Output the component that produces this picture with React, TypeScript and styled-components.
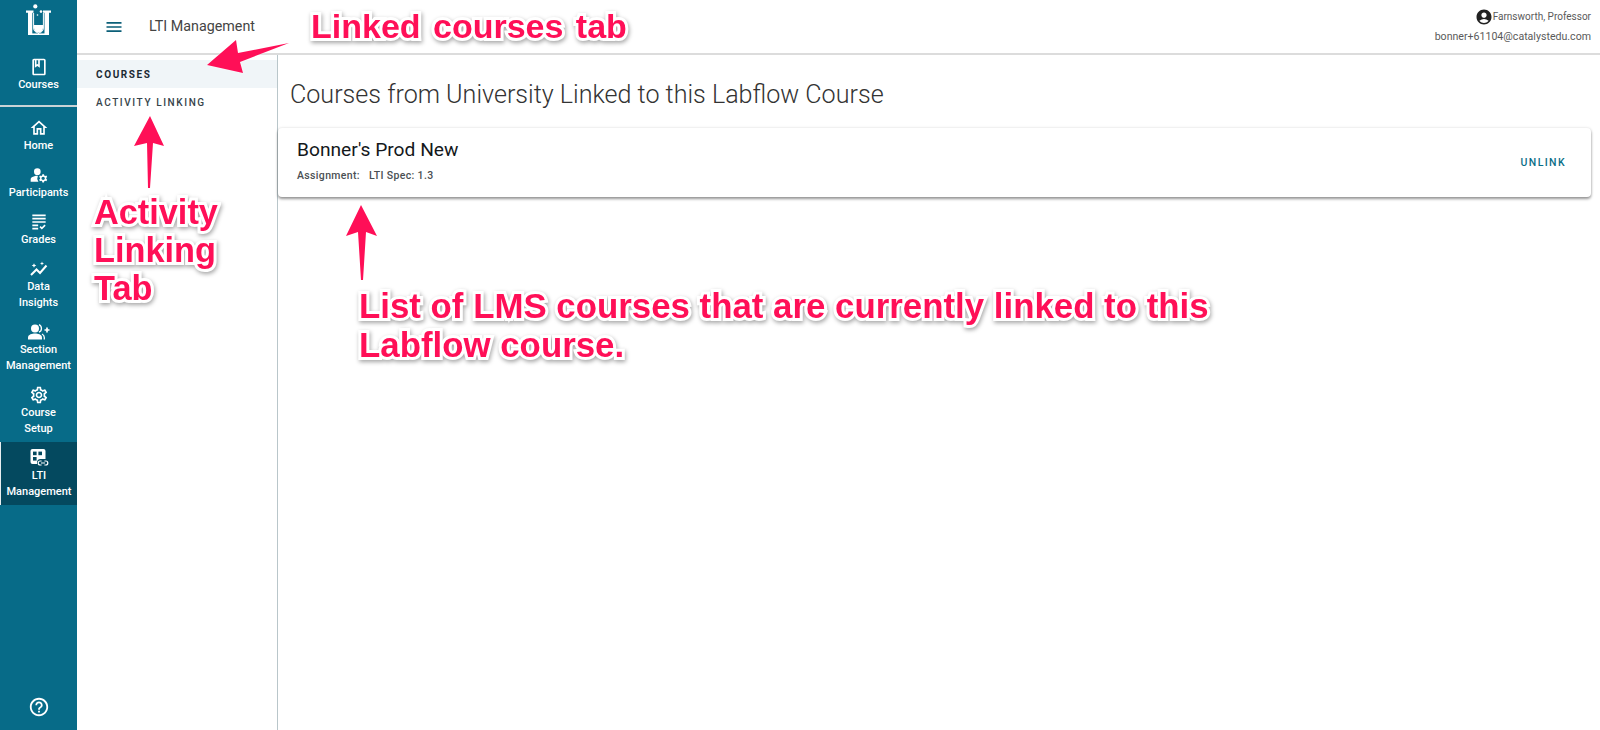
import { FC, ReactNode } from "react";
import styled, { createGlobalStyle } from "styled-components";
import {
  MdAccountCircle,
  MdGrading,
  MdHelpOutline,
  MdManageAccounts,
  MdMenu,
  MdOutlineBook,
  MdOutlineHome,
  MdOutlineSettings,
} from "react-icons/md";

const GlobalStyle = createGlobalStyle`
  html, body, #root {
    margin: 0;
    height: 100%;
  }
  body {
    font-family: Roboto, "Liberation Sans", sans-serif;
    background: #fff;
    overflow: hidden;
  }
`;

const LogoMark = () => (
  <svg width="36" height="40" viewBox="0 0 36 40" fill="none">
    <circle cx="14.3" cy="6.4" r="2.1" fill="#fff" />
    <circle cx="20" cy="11.6" r="1.3" fill="#fff" />
    <circle cx="16.5" cy="15" r="0.8" fill="#fff" />
    <path
      d="M5 10.500h7.500v2.300h-1.200V35H7V12.800H5zM22 10.500h8v2.300h-2V35h-4.500V12.800H22z"
      fill="#fff"
    />
    <path d="M11 35h13v-1.600H11z" fill="#fff" />
    <path d="M13 25h9v3a4.500 4.500 0 0 1-9 0z" fill="#fff" />
    <path
      d="M12.600 13v15a4.900 4.900 0 0 0 9.800 0V13M17.500 33v2"
      stroke="#fff"
      strokeWidth="1"
    />
  </svg>
);

const InsightsIcon = () => (
  <svg width="20" height="20" viewBox="0 0 20 20" fill="none">
    <path d="M2 16l5.500-5.500 3.500 3.500 6.500-7.500" stroke="#fff" strokeWidth="2" />
    <path
      d="M5 4.200l.7 1.600 1.600.7-1.600.7L5 8.800l-.7-1.600-1.600-.7 1.600-.7zM13 2.400l.6 1.500 1.500.6-1.500.6-.6 1.500-.6-1.500-1.500-.6 1.500-.6z"
      fill="#fff"
    />
  </svg>
);

const SectionIcon = () => (
  <svg width="22" height="20" viewBox="0 0 22 20" fill="none">
    <circle cx="7" cy="6.500" r="4" fill="#fff" />
    <path d="M0 17.500v-2C0 12.600 4.300 11.600 7 11.600s7 1 7 3.900v2z" fill="#fff" />
    <path
      d="M11 2.700a4.100 4.100 0 0 1 0 7.500M14 12c1.300.7 2.300 1.800 2.300 3.500v2"
      stroke="#fff"
      strokeWidth="1.300"
    />
    <path d="M19 5.500v5M16.500 8h5" stroke="#fff" strokeWidth="1.700" />
  </svg>
);

const LtiIcon = () => (
  <svg width="20" height="20" viewBox="0 0 20 20">
    <rect x="1.500" y="1" width="15" height="15" rx="2" fill="#fff" />
    <rect x="4" y="3.600" width="3.600" height="3.600" fill="#04495f" />
    <rect x="9.400" y="3.600" width="3.600" height="3.600" fill="#04495f" />
    <rect x="4" y="9" width="3.600" height="3.600" fill="#04495f" />
    <rect x="8" y="11" width="12" height="8" rx="3.500" fill="#04495f" />
    <path
      d="M12.600 13H11.200a2 2 0 0 0 0 4h1.400M15.400 13h1.400a2 2 0 0 1 0 4h-1.400M12 15h4"
      stroke="#fff"
      strokeWidth="1.200"
      fill="none"
    />
  </svg>
);

interface NavItemProps {
  icon: ReactNode;
  lines: string[];
  active?: boolean;
}
const NavItem: FC<NavItemProps> = ({ icon, lines, active }) => (
  <NavItemWrapper $active={active}>
    <NavIcon>{icon}</NavIcon>
    {lines.map((line) => (
      <NavLabel key={line}>{line}</NavLabel>
    ))}
  </NavItemWrapper>
);

export default function App() {
  return (
    <Page>
      <GlobalStyle />
      <Sidebar>
        <Logo>
          <LogoMark />
        </Logo>
        <NavItem icon={<MdOutlineBook size={20} />} lines={["Courses"]} />
        <SideDivider />
        <NavItem icon={<MdOutlineHome size={20} />} lines={["Home"]} />
        <NavItem icon={<MdManageAccounts size={20} />} lines={["Participants"]} />
        <NavItem icon={<MdGrading size={20} />} lines={["Grades"]} />
        <NavItem icon={<InsightsIcon />} lines={["Data", "Insights"]} />
        <NavItem icon={<SectionIcon />} lines={["Section", "Management"]} />
        <NavItem icon={<MdOutlineSettings size={20} />} lines={["Course", "Setup"]} />
        <NavItem icon={<LtiIcon />} lines={["LTI", "Management"]} active />
        <HelpButton>
          <MdHelpOutline size={22} />
        </HelpButton>
      </Sidebar>

      <Main>
        <TopBar>
          <MenuButton>
            <MdMenu size={20} />
          </MenuButton>
          <PageTitle>LTI Management</PageTitle>
          <UserBlock>
            <UserName>
              <MdAccountCircle size={18} color="#222" />
              Farnsworth, Professor
            </UserName>
            <UserEmail>bonner+61104@catalystedu.com</UserEmail>
          </UserBlock>
        </TopBar>

        <Body>
          <SubNav>
            <SubNavItem $active>COURSES</SubNavItem>
            <SubNavItem>ACTIVITY LINKING</SubNavItem>
          </SubNav>
          <Content>
            <Heading>Courses from University Linked to this Labflow Course</Heading>
            <Card>
              <div>
                <CardTitle>Bonner's Prod New</CardTitle>
                <CardMeta>
                  <span>Assignment:</span>
                  <span>LTI Spec: 1.3</span>
                </CardMeta>
              </div>
              <UnlinkButton>UNLINK</UnlinkButton>
            </Card>
          </Content>
        </Body>
      </Main>

      <ArrowLayer width="1600" height="730" viewBox="0 0 1600 730">
        <polygon points="207,65 236,40 238,53 289,43 240,62 243,73" />
        <polygon points="150,116 134,146 147,143 148,188 150,188 153,143 164,146" />
        <polygon points="361,205 346,236 358,232 361,280 363,280 366,232 377,236" />
      </ArrowLayer>

      <TabCallout>Linked courses tab</TabCallout>
      <ActivityCallout>
        Activity
        <br />
        Linking
        <br />
        Tab
      </ActivityCallout>
      <ListCallout>
        List of LMS courses that are currently linked to this
        <br />
        Labflow course.
      </ListCallout>
    </Page>
  );
}

const Page = styled.div`
  position: relative;
  display: flex;
  width: 1600px;
  height: 730px;
  overflow: hidden;
`;

const Sidebar = styled.aside`
  flex: 0 0 77px;
  display: flex;
  flex-direction: column;
  background: #076b88;
  color: #fff;
`;

const Logo = styled.div`
  height: 51px;
  display: flex;
  justify-content: center;
  align-items: flex-start;
`;

const SideDivider = styled.div`
  height: 2px;
  margin: 7px 0 5px;
  background: #c9d3d6;
`;

const NavItemWrapper = styled.div<{ $active?: boolean }>`
  display: flex;
  flex-direction: column;
  align-items: center;
  padding: 6px 0 5px;
  background: ${({ $active }) => ($active ? "#04495f" : "transparent")};
  border-left: ${({ $active }) => ($active ? "1px solid #e8eef0" : "0")};
`;

const NavIcon = styled.div`
  height: 20px;
  display: flex;
  align-items: center;
  justify-content: center;
`;

const NavLabel = styled.div`
  font-size: 11px;
  font-weight: 500;
  line-height: 16px;
  white-space: nowrap;
`;

const HelpButton = styled.div`
  margin-top: auto;
  padding-bottom: 12px;
  display: flex;
  justify-content: center;
`;

const Main = styled.div`
  flex: 1;
  display: flex;
  flex-direction: column;
  min-width: 0;
`;

const TopBar = styled.header`
  height: 53px;
  flex: none;
  display: flex;
  align-items: center;
  padding: 0 9px 0 27px;
  border-bottom: 2px solid #dcdcdc;
`;

const MenuButton = styled.div`
  display: flex;
  color: #0b5f78;
`;

const PageTitle = styled.div`
  margin: 0 0 1px 25px;
  font-size: 14.3px;
  color: #444;
`;

const UserBlock = styled.div`
  margin-left: auto;
  display: flex;
  flex-direction: column;
  align-items: flex-end;
  gap: 3px;
  color: #5a5a5a;
`;

const UserName = styled.div`
  display: flex;
  align-items: center;
  font-size: 10px;
  line-height: 18px;
`;

const UserEmail = styled.div`
  font-size: 10.6px;
  line-height: 16px;
`;

const Body = styled.div`
  flex: 1;
  display: flex;
  min-height: 0;
`;

const SubNav = styled.nav`
  flex: 0 0 200px;
  padding-top: 5px;
  border-right: 1px solid #b9c6ca;
`;

const SubNavItem = styled.div<{ $active?: boolean }>`
  height: 28px;
  padding-left: 19px;
  display: flex;
  align-items: center;
  font-size: 10px;
  letter-spacing: 1.6px;
  font-weight: ${({ $active }) => ($active ? 700 : 500)};
  color: ${({ $active }) => ($active ? "#1b2a33" : "#36434a")};
  background: ${({ $active }) => ($active ? "#f0f5f8" : "transparent")};
`;

const Content = styled.main`
  flex: 1;
  min-width: 0;
  padding-right: 9px;
`;

const Heading = styled.h1`
  margin: 0;
  padding: 24px 0 0 12px;
  height: 73px;
  box-sizing: border-box;
  font-size: 25.1px;
  font-weight: 300;
  line-height: 32px;
  color: #333;
`;

const Card = styled.section`
  height: 69px;
  box-sizing: border-box;
  padding: 11px 25px 0 19px;
  display: flex;
  justify-content: space-between;
  align-items: flex-start;
  background: #fff;
  border-radius: 4px;
  box-shadow: 0 2px 3px rgba(0, 0, 0, 0.4), 0 0 3px rgba(0, 0, 0, 0.12);
`;

const CardTitle = styled.div`
  font-size: 19.2px;
  line-height: 22px;
  color: #14181b;
`;

const CardMeta = styled.div`
  display: flex;
  gap: 9px;
  margin-top: 8px;
  font-size: 10.5px;
  line-height: 14px;
  font-weight: 500;
  letter-spacing: 0.35px;
  color: #4a4f53;
`;

const UnlinkButton = styled.div`
  margin-top: 16px;
  font-size: 10.5px;
  font-weight: 500;
  letter-spacing: 1.4px;
  line-height: 16px;
  color: #0b6e87;
`;

const ArrowLayer = styled.svg`
  position: absolute;
  inset: 0;
  fill: #ff0f57;
  filter: drop-shadow(0 0 1px rgba(255, 255, 255, 0.9));
  pointer-events: none;
`;

const Callout = styled.div`
  position: absolute;
  font-family: "Liberation Sans", Arial, sans-serif;
  font-weight: 700;
  color: #ff0f57;
  -webkit-text-stroke: 6px #fff;
  paint-order: stroke fill;
  filter: drop-shadow(1px 2px 2px rgba(0, 0, 0, 0.35));
  white-space: nowrap;
`;

const TabCallout = styled(Callout)`
  left: 311px;
  top: 7px;
  font-size: 34px;
  line-height: 38px;
  word-spacing: 3px;
`;

const ActivityCallout = styled(Callout)`
  left: 94px;
  top: 193px;
  font-size: 34.3px;
  line-height: 38px;
`;

const ListCallout = styled(Callout)`
  left: 359px;
  top: 286px;
  font-size: 34.85px;
  line-height: 39px;
`;
